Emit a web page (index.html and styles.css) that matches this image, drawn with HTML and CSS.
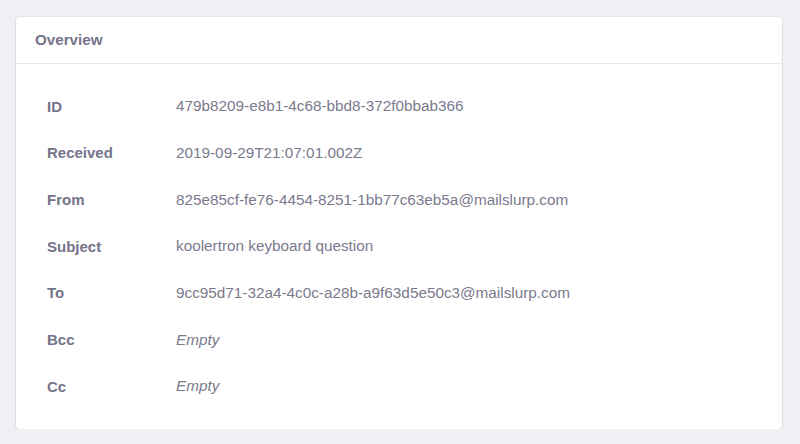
FILE: index.html
```html
<!DOCTYPE html>
<html>
<head>
<meta charset="utf-8">
<link rel="stylesheet" href="styles.css">
</head>
<body>
<div class="card">
  <div class="card-header">Overview</div>
  <div class="card-body">
    <div class="row"><div class="label">ID</div><div class="value">479b8209-e8b1-4c68-bbd8-372f0bbab366</div></div>
    <div class="row"><div class="label">Received</div><div class="value">2019-09-29T21:07:01.002Z</div></div>
    <div class="row"><div class="label">From</div><div class="value">825e85cf-fe76-4454-8251-1bb77c63eb5a@mailslurp.com</div></div>
    <div class="row"><div class="label">Subject</div><div class="value">koolertron keyboard question</div></div>
    <div class="row"><div class="label">To</div><div class="value">9cc95d71-32a4-4c0c-a28b-a9f63d5e50c3@mailslurp.com</div></div>
    <div class="row"><div class="label">Bcc</div><div class="value empty">Empty</div></div>
    <div class="row"><div class="label">Cc</div><div class="value empty">Empty</div></div>
  </div>
</div>
</body>
</html>
```
FILE: styles.css
```css
html, body {
  margin: 0;
  padding: 0;
  background: #eff0f4;
}
body {
  padding: 17px 18px 0 16px;
  font-family: "Liberation Sans", Arial, sans-serif;
  font-size: 15px;
  color: #77778a;
}
.card {
  background: #fff;
  border-radius: 4px;
  box-shadow: 0 1px 2px rgba(0,0,0,0.12), 0 0 0 1px rgba(0,0,0,0.03);
  width: 766px;
}
.card-header {
  height: 46px;
  line-height: 46px;
  padding: 0 19px;
  font-weight: bold;
  font-size: 15.2px;
  color: #74748a;
  border-bottom: 1px solid #e6e7eb;
}
.card-body {
  padding: 19px 31px 19px 31px;
}
.row {
  display: flex;
  height: 46.67px;
  align-items: center;
}
.label {
  width: 129px;
  font-weight: bold;
  color: #74748a;
}
.value {
  font-size: 15.3px;
  color: #7a7a8d;
}
.empty {
  font-style: italic;
}
```
